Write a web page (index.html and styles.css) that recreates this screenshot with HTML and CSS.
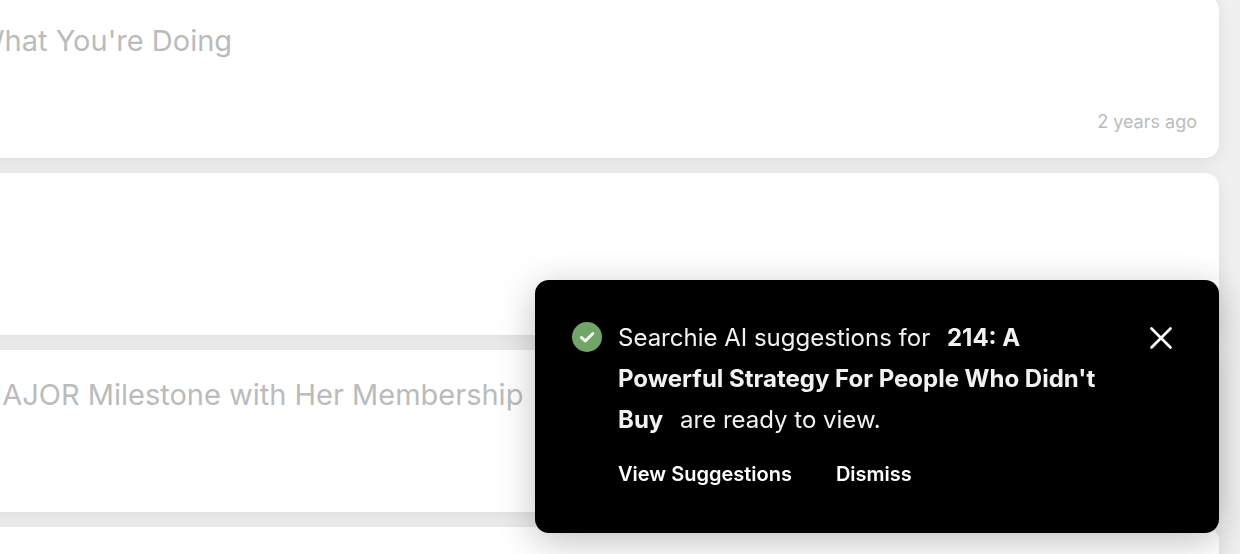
FILE: index.html
```html
<!DOCTYPE html>
<html lang="en">
<head>
    <meta charset="UTF-8">
    <meta name="viewport" content="width=device-width, initial-scale=1.0">
    <title>Searchie</title>
    <link rel="stylesheet" href="styles.css">
</head>
<body>
    <main class="media-list">
        <article class="card">
            <h2 class="card-title">What You're Doing</h2>
            <p class="card-date">2 years ago</p>
        </article>
        <article class="card"></article>
        <article class="card">
            <h2 class="card-title">MAJOR Milestone with Her Membership</h2>
        </article>
        <article class="card"></article>
    </main>

    <div class="toast" role="status">
        <svg class="toast-icon" viewBox="0 0 30 30" aria-hidden="true">
            <circle cx="15" cy="15" r="15" fill="#72a568"/>
            <path d="M9.3 15.4l4 3.6 7.6-7.6" fill="none" stroke="#fff" stroke-width="2.8" stroke-linecap="round" stroke-linejoin="round"/>
        </svg>
        <div class="toast-body">
            <p class="toast-text">Searchie AI suggestions for <strong>214: A Powerful Strategy For People Who Didn't Buy</strong> are ready to view.</p>
            <div class="toast-actions">
                <button type="button">View Suggestions</button>
                <button type="button">Dismiss</button>
            </div>
        </div>
        <button type="button" class="toast-close" aria-label="Close">
            <svg viewBox="0 0 24 24" aria-hidden="true">
                <path d="M2.5 2.5l19 19M21.5 2.5l-19 19" fill="none" stroke="#fff" stroke-width="2.7" stroke-linecap="round"/>
            </svg>
        </button>
    </div>
</body>
</html>
```
FILE: styles.css
```css
*{
    padding: 0;
    margin: 0;
    box-sizing: border-box;
}
body{
    height: 100vh;
    overflow: hidden;
    background: #f0f0f0;
    font-family: Inter, 'Liberation Sans', sans-serif;
}
.media-list{
    display: flex;
    flex-direction: column;
    gap: 15px;
    margin: -4px 21px 0 -46px;
}
.card{
    display: flex;
    flex-direction: column;
    justify-content: space-between;
    flex-shrink: 0;
    min-height: 162px;
    padding: 24px 22px;
    border-radius: 14px;
    background: #fff;
    box-shadow: 0 4px 18px rgba(0, 0, 0, .08);
}
.card-title{
    font-size: 29px;
    font-weight: 400;
    line-height: 41px;
    color: #bbb;
}
.card-date{
    font-size: 18px;
    line-height: 24px;
    text-align: right;
    color: #bbb;
}
.toast{
    position: fixed;
    right: 21px;
    bottom: 21px;
    display: flex;
    align-items: flex-start;
    width: 684px;
    padding: 37px 46px 45px 37px;
    border-radius: 14px;
    background: #000;
    color: #f2f2f2;
    box-shadow: 0 8px 36px rgba(0, 0, 0, .25);
}
.toast-icon{
    flex-shrink: 0;
    width: 30px;
    height: 30px;
    margin: 5px 16px 0 0;
}
.toast-body{
    flex: 1;
}
.toast-text{
    max-width: 500px;
    font-size: 24px;
    line-height: 41px;
}
.toast-text strong{
    margin: 0 10px;
    font-weight: 700;
}
.toast-actions{
    display: flex;
    gap: 44px;
    margin-top: 20px;
}
.toast button{
    border: none;
    background: transparent;
    font-family: inherit;
    font-size: 20px;
    font-weight: 600;
    line-height: 28px;
    color: #fff;
    cursor: pointer;
}
.toast .toast-close{
    width: 24px;
    height: 24px;
    margin-top: 9px;
}
.toast-close svg{
    display: block;
    width: 24px;
    height: 24px;
}
```
